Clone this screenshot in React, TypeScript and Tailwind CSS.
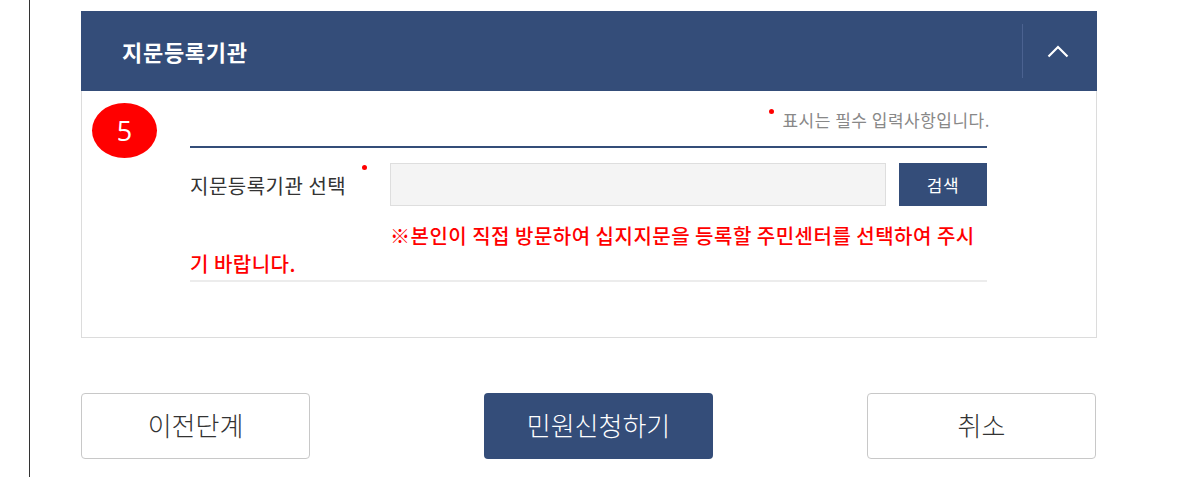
import React from "react";

const FONT = { fontFamily: '"Noto Sans CJK KR", "Noto Sans", sans-serif' };

export default function App() {
  return (
    <div className="w-[1195px] h-[477px] bg-white overflow-hidden" style={FONT}>
      <div className="ml-[29px] h-[477px] border-l border-[#333] pl-[51px] pt-[11px]">
        <div className="w-[1016px]">
          {/* header */}
          <div className="h-[80px] bg-[#344d79] flex items-center">
            <div className="flex-1 pl-[41px] text-[22px] font-bold text-white tracking-[0.7px]">지문등록기관</div>
            <div className="w-[75px] h-[54px] border-l border-[#4b6290] flex items-center justify-center">
              <svg width="22" height="13" viewBox="0 0 22 13" className="mr-[5px]">
                <polyline points="1.5,11.5 11,2 20.5,11.5" fill="none" stroke="white" strokeWidth="2.2" />
              </svg>
            </div>
          </div>
          {/* body */}
          <div className="relative h-[247px] border border-t-0 border-[#dcdcdc]">
            <div className="absolute left-[10px] top-[12px] w-[65px] h-[55px] rounded-[50%] bg-[#ff0000] flex items-center justify-center text-white text-[27px] leading-none" style={{ fontFamily: '"Open Sans", "Noto Sans", sans-serif' }}>
              5
            </div>
            <div className="ml-[108px] w-[797px] pt-[18px]">
              <div className="flex justify-end text-[17px] leading-[22px] text-[#888] tracking-[0.5px] mr-[-3px]">
                <span className="relative">
                  <span className="absolute left-[-13px] top-[0px] w-[5px] h-[5px] rounded-full bg-[#ff0000]" />
                  표시는 필수 입력사항입니다.
                </span>
              </div>
              <div className="mt-[15px] h-[2px] bg-[#344d79]" />
              <div className="pt-[15px] flex items-center">
                <div className="relative w-[200px] text-[20px] tracking-[0.5px] text-[#333] leading-[24px] pt-[3px]">
                  지문등록기관 선택
                  <span className="absolute left-[172px] top-[-6px] w-[5px] h-[5px] rounded-full bg-[#ff0000]" />
                </div>
                <div className="w-[496px] h-[43px] bg-[#f4f4f4] border border-[#dedede]" />
                <div className="ml-[13px] w-[88px] h-[43px] bg-[#344d79] text-white text-[17px] tracking-[0.5px] flex items-center justify-center">검색</div>
              </div>
              <p className="mt-[16px] text-[20px] tracking-[0.5px] leading-[28px] font-medium text-[#ff0000] indent-[200px]">
                ※본인이 직접 방문하여 십지지문을 등록할 주민센터를 선택하여 주시기 바랍니다.
              </p>
              <div className="mt-[2px] h-[2px] bg-[#ececec]" />
            </div>
          </div>
          {/* buttons */}
          <div className="mt-[55px] flex">
            <div className="w-[229px] h-[66px] border border-[#c8c8c8] rounded-[4px] flex items-center justify-center pb-[3px] text-[26px] font-light text-[#333]">이전단계</div>
            <div className="ml-[174px] w-[229px] h-[66px] bg-[#344d79] rounded-[4px] flex items-center justify-center pb-[3px] text-[26px] font-light text-white">민원신청하기</div>
            <div className="ml-[154px] w-[229px] h-[66px] border border-[#c8c8c8] rounded-[4px] flex items-center justify-center pb-[3px] text-[26px] font-light text-[#333]">취소</div>
          </div>
        </div>
      </div>
    </div>
  );
}
